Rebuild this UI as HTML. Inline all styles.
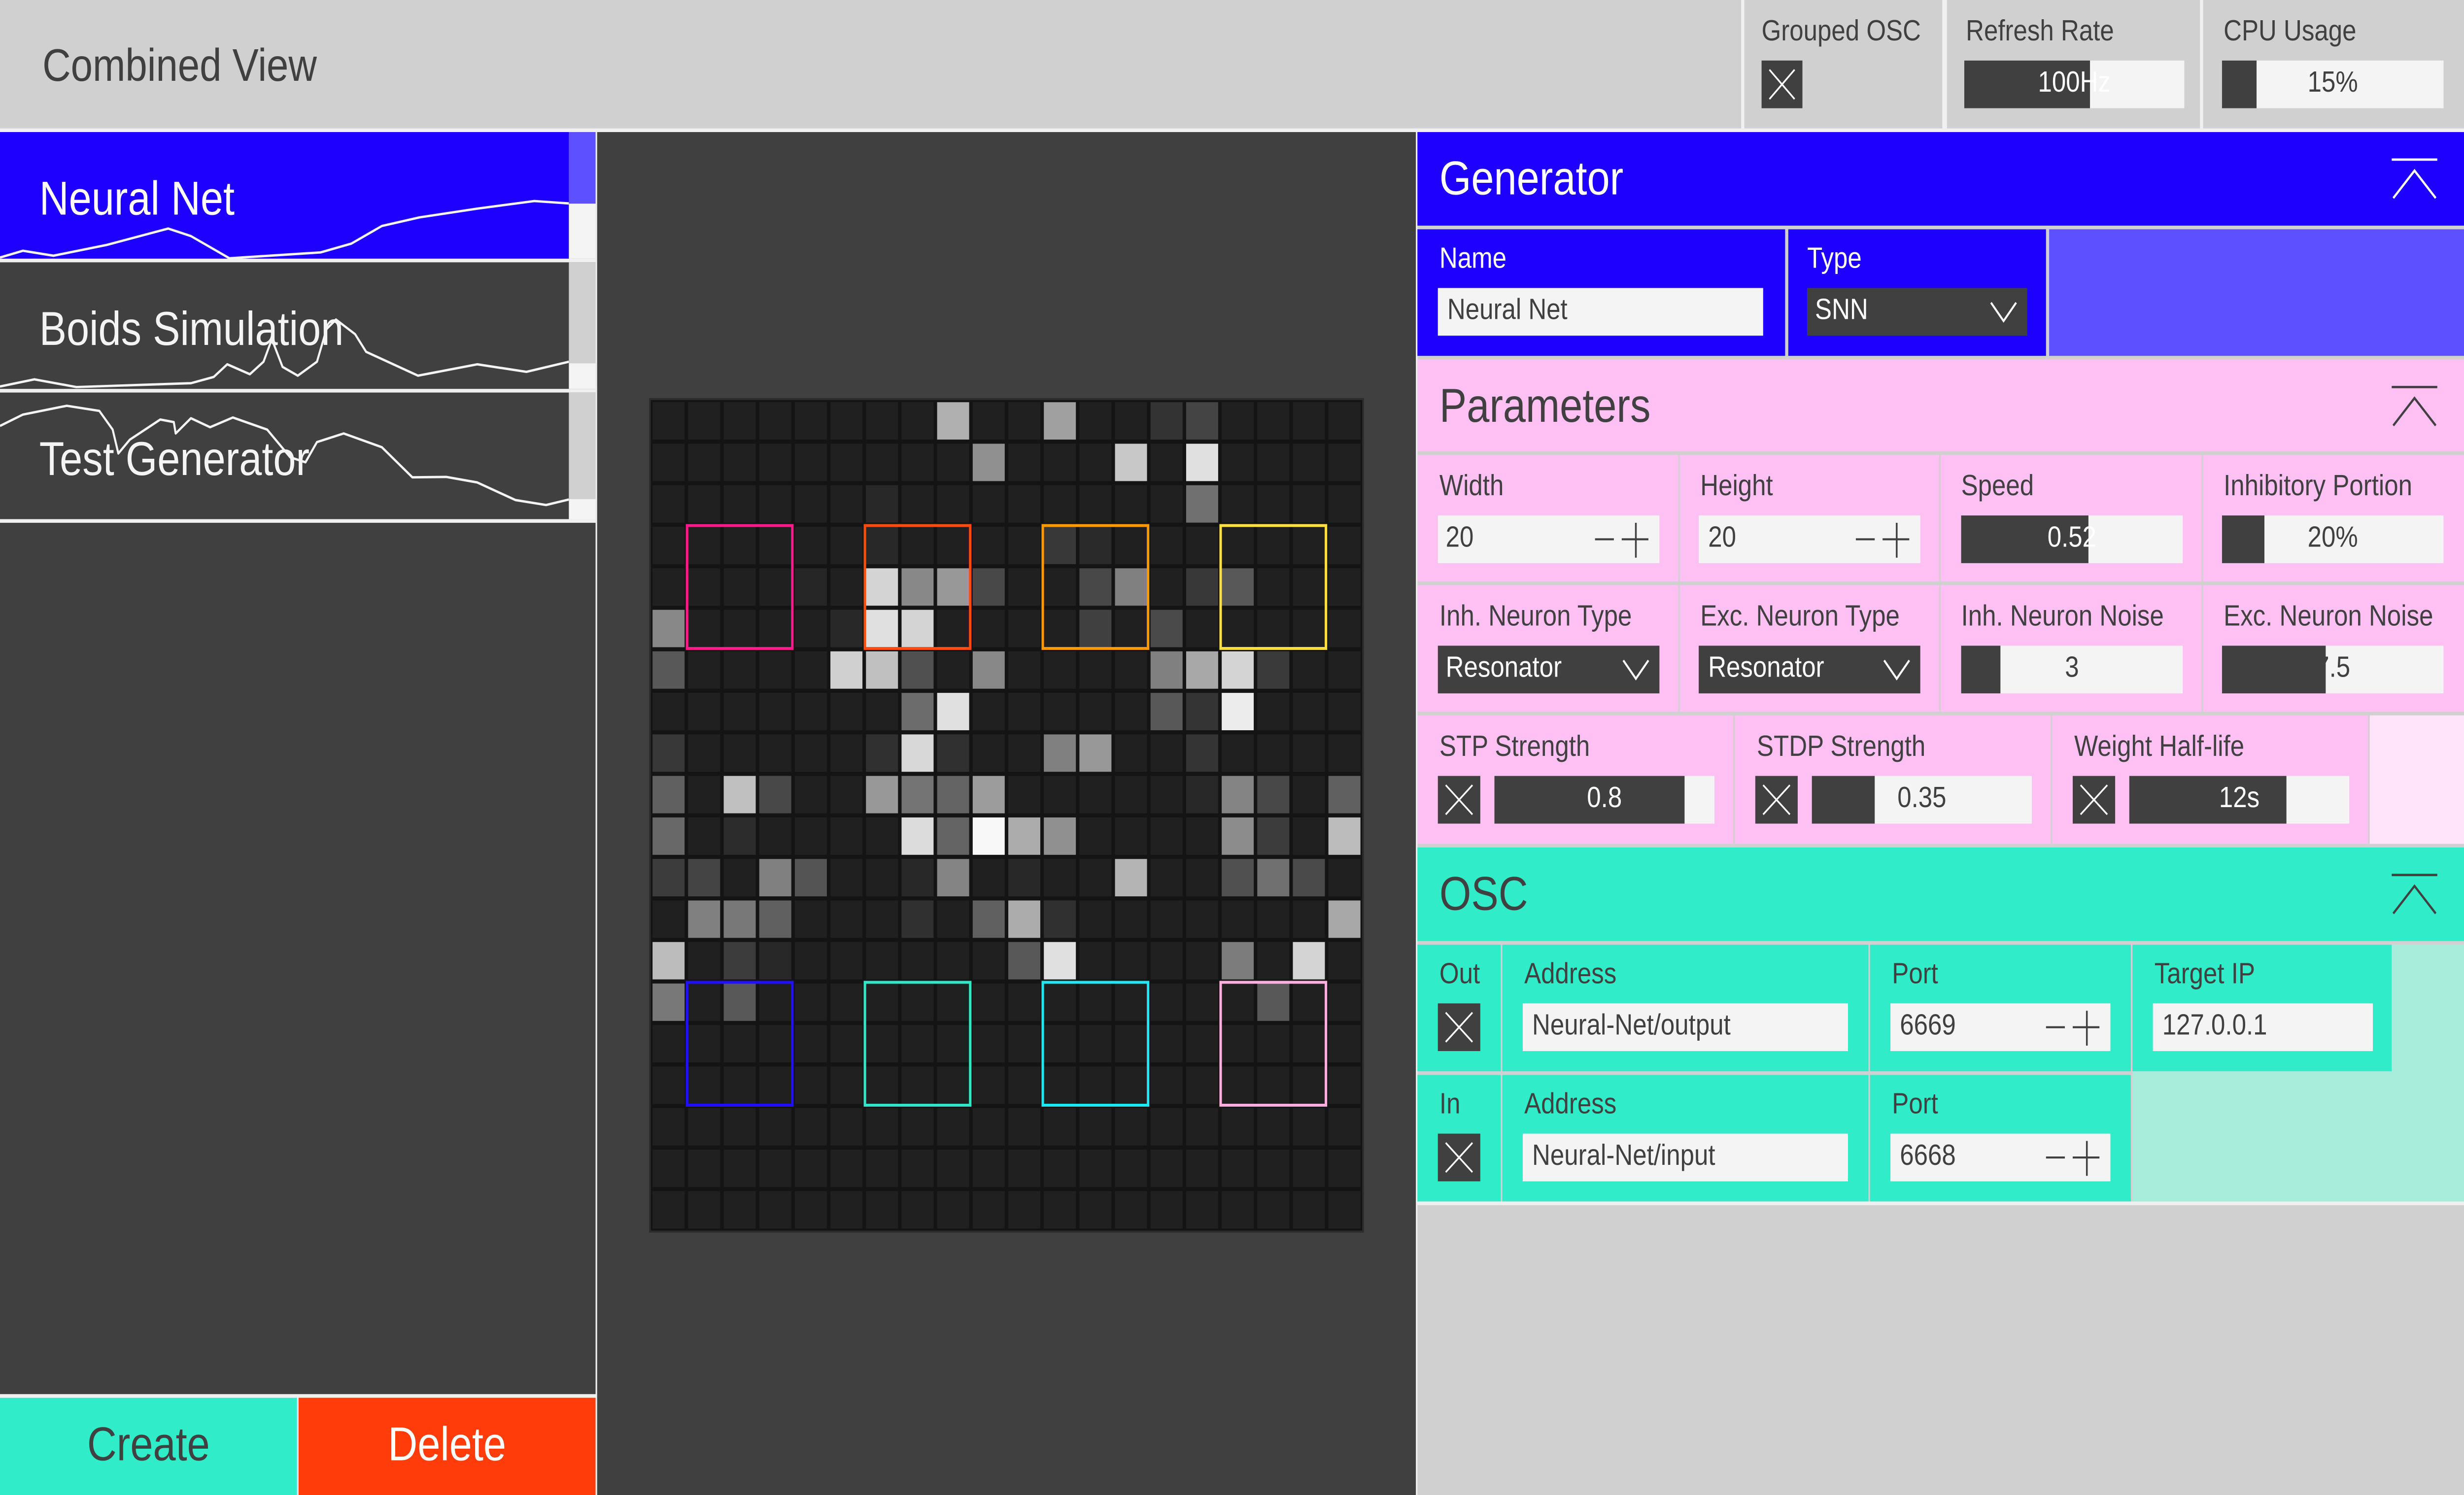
<!DOCTYPE html>
<html><head><meta charset="utf-8">
<style>
html,body{margin:0;padding:0;width:100vw;height:100vh;overflow:hidden;background:#404040}
#w{position:absolute;left:0;top:0;width:1568px;height:815px;transform:scale(3.72449,3.72270);transform-origin:0 0;font-family:"Liberation Sans Narrow","Liberation Sans",sans-serif;color:#404040;background:#f0f0f0;overflow:hidden}
.a{position:absolute;box-sizing:border-box}
.t{position:absolute;white-space:nowrap}
.lbl{font-size:16px}
.big{font-size:26px}
.inp{background:#f4f4f4}
.dk{background:#404040}
.cb{position:absolute;background:#404040}
.cb svg{position:absolute;left:0;top:0}
</style></head><body><div id="w">
<!-- top bar -->
<div class="a" style="left:0;top:0;width:1108px;height:70px;background:#d0d0d0"></div>
<div class="t" style="left:27px;top:22px;font-size:25px">Combined View</div>
<div class="a" style="left:1110px;top:0;width:126px;height:70px;background:#d0d0d0"></div>
<div class="a" style="left:1239px;top:0;width:161px;height:70px;background:#d0d0d0"></div>
<div class="a" style="left:1402px;top:0;width:166px;height:70px;background:#d0d0d0"></div>
<div class="t lbl" style="left:1121px;top:9px">Grouped OSC</div>
<div class="t lbl" style="left:1251px;top:9px">Refresh Rate</div>
<div class="t lbl" style="left:1415px;top:9px">CPU Usage</div>
<div class="cb" style="left:1121px;top:33px;width:26px;height:26px"><svg width="26" height="26"><path d="M5 5L21 21M21 5L5 21" stroke="#fff" stroke-width="1"/></svg></div>
<div class="a inp" style="left:1250px;top:33px;width:140px;height:26px"></div>
<div class="a dk" style="left:1250px;top:33px;width:80px;height:26px"></div>
<div class="t" style="left:1250px;top:37px;width:140px;text-align:center;font-size:16px;color:#fff">100Hz</div>
<div class="a inp" style="left:1414px;top:33px;width:141px;height:26px"></div>
<div class="a dk" style="left:1414px;top:33px;width:22px;height:26px"></div>
<div class="t" style="left:1414px;top:37px;width:141px;text-align:center;font-size:16px">15%</div>

<!-- left panel -->
<div class="a" style="left:0;top:72px;width:379px;height:688px;background:#404040"></div>
<div class="a" style="left:0;top:72px;width:362px;height:69px;background:#1e00ff"></div>
<div class="a" style="left:362px;top:72px;width:17px;height:39px;background:#5c50ff"></div>
<div class="a" style="left:362px;top:111px;width:17px;height:30px;background:#f4f4f4"></div>
<div class="a" style="left:0;top:141px;width:379px;height:2px;background:#f0f0f0"></div>
<div class="a" style="left:362px;top:143px;width:17px;height:55px;background:#d0d0d0"></div>
<div class="a" style="left:362px;top:198px;width:17px;height:14px;background:#f4f4f4"></div>
<div class="a" style="left:0;top:212px;width:379px;height:2px;background:#f0f0f0"></div>
<div class="a" style="left:362px;top:214px;width:17px;height:58px;background:#d0d0d0"></div>
<div class="a" style="left:362px;top:272px;width:17px;height:11px;background:#f4f4f4"></div>
<div class="a" style="left:0;top:283px;width:379px;height:2px;background:#f0f0f0"></div>
<div class="t" style="left:25px;top:93px;font-size:26px;color:#fff">Neural Net</div>
<div class="t" style="left:25px;top:164px;font-size:26px;color:#f4f4f4">Boids Simulation</div>
<div class="t" style="left:25px;top:235px;font-size:26px;color:#f4f4f4">Test Generator</div>
<svg class="a" style="left:0;top:0" width="362" height="290" viewBox="0 0 362 290"><g fill="none" stroke="#f4f4f4" stroke-width="1.3" stroke-linejoin="round">
<polyline points="0,140.4 14.6,136.7 34,139.4 68,133.5 107,124.6 121.5,128.7 146,140.8 204,137.6 223.6,132.8 243,123.2 267,118.5 304,113.7 340,109.6 362,110.9"/>
<polyline points="0,210.7 21.9,206.8 48.6,211 121.5,208.9 136,205.5 144.6,198.6 159,204 167.7,197.2 173,184.9 179.8,200 189.5,204.8 201.7,197.2 207.8,179.4 213.8,174.2 226,182.2 233,191.8 266,204.8 303.7,198.6 335,202.7 362,197.2"/>
<polyline points="0,232.2 14.6,226 42.5,221.2 63.2,224 71.7,234.2 75.3,247.2 82.6,239.7 102,228.7 110.6,230.1 111.8,236.3 121.5,228 133.7,232.9 148.2,227.6 170,234.2 184.7,249.3 194.4,252 201.7,241 218.7,236.3 243,243.8 262.4,260.2 284,260 303.7,263 328,272.6 347.5,275.3 362,272.3"/>
</g></svg>
<div class="a" style="left:0;top:762px;width:189px;height:53px;background:#30ecc8"></div>
<div class="t" style="left:0;top:772px;width:189px;text-align:center;font-size:26px">Create</div>
<div class="a" style="left:190px;top:762px;width:189px;height:53px;background:#ff3c0a"></div>
<div class="t" style="left:190px;top:772px;width:189px;text-align:center;font-size:26px;color:#fff">Delete</div>

<!-- center -->
<div class="a" style="left:380px;top:72px;width:521px;height:743px;background:#404040"></div>
<svg class="a" style="left:413px;top:217px" width="455" height="455" viewBox="-0.05 -0.05 20.1 20.1">
<defs><pattern id="p" patternUnits="userSpaceOnUse" width="1" height="1"><rect width="1" height="1" fill="#141414"/><rect x=".05" y=".05" width=".9" height=".9" fill="#202020"/></pattern></defs>
<rect x="-0.05" y="-0.05" width="20.1" height="20.1" fill="#2c2c2c"/>
<rect x="0" y="0" width="20" height="20" fill="url(#p)"/>
<g transform="translate(.05 .05)">
<rect x="8" y="0" width=".9" height=".9" fill="#b0b0b0"/><rect x="11" y="0" width=".9" height=".9" fill="#a0a0a0"/><rect x="14" y="0" width=".9" height=".9" fill="#333"/><rect x="15" y="0" width=".9" height=".9" fill="#444"/>
<rect x="9" y="1" width=".9" height=".9" fill="#909090"/><rect x="13" y="1" width=".9" height=".9" fill="#c8c8c8"/><rect x="15" y="1" width=".9" height=".9" fill="#e0e0e0"/>
<rect x="6" y="2" width=".9" height=".9" fill="#282828"/><rect x="15" y="2" width=".9" height=".9" fill="#707070"/>
<rect x="6" y="3" width=".9" height=".9" fill="#282828"/><rect x="11" y="3" width=".9" height=".9" fill="#383838"/><rect x="12" y="3" width=".9" height=".9" fill="#2a2a2a"/>
<rect x="4" y="4" width=".9" height=".9" fill="#262626"/><rect x="6" y="4" width=".9" height=".9" fill="#d4d4d4"/><rect x="7" y="4" width=".9" height=".9" fill="#888"/><rect x="8" y="4" width=".9" height=".9" fill="#989898"/><rect x="9" y="4" width=".9" height=".9" fill="#484848"/><rect x="12" y="4" width=".9" height=".9" fill="#484848"/><rect x="13" y="4" width=".9" height=".9" fill="#808080"/><rect x="15" y="4" width=".9" height=".9" fill="#383838"/><rect x="16" y="4" width=".9" height=".9" fill="#585858"/>
<rect x="0" y="5" width=".9" height=".9" fill="#888"/><rect x="5" y="5" width=".9" height=".9" fill="#282828"/><rect x="6" y="5" width=".9" height=".9" fill="#e0e0e0"/><rect x="7" y="5" width=".9" height=".9" fill="#d4d4d4"/><rect x="12" y="5" width=".9" height=".9" fill="#404040"/><rect x="14" y="5" width=".9" height=".9" fill="#4a4a4a"/>
<rect x="0" y="6" width=".9" height=".9" fill="#585858"/><rect x="5" y="6" width=".9" height=".9" fill="#d0d0d0"/><rect x="6" y="6" width=".9" height=".9" fill="#c0c0c0"/><rect x="7" y="6" width=".9" height=".9" fill="#505050"/><rect x="9" y="6" width=".9" height=".9" fill="#888"/><rect x="14" y="6" width=".9" height=".9" fill="#808080"/><rect x="15" y="6" width=".9" height=".9" fill="#a8a8a8"/><rect x="16" y="6" width=".9" height=".9" fill="#d4d4d4"/><rect x="17" y="6" width=".9" height=".9" fill="#3a3a3a"/>
<rect x="7" y="7" width=".9" height=".9" fill="#6c6c6c"/><rect x="8" y="7" width=".9" height=".9" fill="#e0e0e0"/><rect x="14" y="7" width=".9" height=".9" fill="#585858"/><rect x="15" y="7" width=".9" height=".9" fill="#343434"/><rect x="16" y="7" width=".9" height=".9" fill="#ececec"/>
<rect x="0" y="8" width=".9" height=".9" fill="#383838"/><rect x="6" y="8" width=".9" height=".9" fill="#303030"/><rect x="7" y="8" width=".9" height=".9" fill="#d8d8d8"/><rect x="8" y="8" width=".9" height=".9" fill="#303030"/><rect x="11" y="8" width=".9" height=".9" fill="#808080"/><rect x="12" y="8" width=".9" height=".9" fill="#989898"/><rect x="15" y="8" width=".9" height=".9" fill="#343434"/>
<rect x="0" y="9" width=".9" height=".9" fill="#606060"/><rect x="2" y="9" width=".9" height=".9" fill="#c0c0c0"/><rect x="3" y="9" width=".9" height=".9" fill="#484848"/><rect x="6" y="9" width=".9" height=".9" fill="#989898"/><rect x="7" y="9" width=".9" height=".9" fill="#747474"/><rect x="8" y="9" width=".9" height=".9" fill="#646464"/><rect x="9" y="9" width=".9" height=".9" fill="#9c9c9c"/><rect x="15" y="9" width=".9" height=".9" fill="#282828"/><rect x="16" y="9" width=".9" height=".9" fill="#848484"/><rect x="17" y="9" width=".9" height=".9" fill="#484848"/><rect x="19" y="9" width=".9" height=".9" fill="#606060"/>
<rect x="0" y="10" width=".9" height=".9" fill="#686868"/><rect x="2" y="10" width=".9" height=".9" fill="#2c2c2c"/><rect x="7" y="10" width=".9" height=".9" fill="#dcdcdc"/><rect x="8" y="10" width=".9" height=".9" fill="#646464"/><rect x="9" y="10" width=".9" height=".9" fill="#f8f8f8"/><rect x="10" y="10" width=".9" height=".9" fill="#acacac"/><rect x="11" y="10" width=".9" height=".9" fill="#909090"/><rect x="16" y="10" width=".9" height=".9" fill="#8c8c8c"/><rect x="17" y="10" width=".9" height=".9" fill="#3c3c3c"/><rect x="19" y="10" width=".9" height=".9" fill="#bcbcbc"/>
<rect x="0" y="11" width=".9" height=".9" fill="#3c3c3c"/><rect x="1" y="11" width=".9" height=".9" fill="#444"/><rect x="3" y="11" width=".9" height=".9" fill="#808080"/><rect x="4" y="11" width=".9" height=".9" fill="#545454"/><rect x="7" y="11" width=".9" height=".9" fill="#282828"/><rect x="8" y="11" width=".9" height=".9" fill="#848484"/><rect x="10" y="11" width=".9" height=".9" fill="#282828"/><rect x="13" y="11" width=".9" height=".9" fill="#b4b4b4"/><rect x="16" y="11" width=".9" height=".9" fill="#505050"/><rect x="17" y="11" width=".9" height=".9" fill="#707070"/><rect x="18" y="11" width=".9" height=".9" fill="#4a4a4a"/>
<rect x="1" y="12" width=".9" height=".9" fill="#808080"/><rect x="2" y="12" width=".9" height=".9" fill="#787878"/><rect x="3" y="12" width=".9" height=".9" fill="#606060"/><rect x="7" y="12" width=".9" height=".9" fill="#303030"/><rect x="9" y="12" width=".9" height=".9" fill="#606060"/><rect x="10" y="12" width=".9" height=".9" fill="#acacac"/><rect x="11" y="12" width=".9" height=".9" fill="#303030"/><rect x="19" y="12" width=".9" height=".9" fill="#a8a8a8"/>
<rect x="0" y="13" width=".9" height=".9" fill="#bcbcbc"/><rect x="2" y="13" width=".9" height=".9" fill="#3c3c3c"/><rect x="3" y="13" width=".9" height=".9" fill="#282828"/><rect x="10" y="13" width=".9" height=".9" fill="#585858"/><rect x="11" y="13" width=".9" height=".9" fill="#e0e0e0"/><rect x="16" y="13" width=".9" height=".9" fill="#7c7c7c"/><rect x="18" y="13" width=".9" height=".9" fill="#d4d4d4"/>
<rect x="0" y="14" width=".9" height=".9" fill="#787878"/><rect x="2" y="14" width=".9" height=".9" fill="#585858"/><rect x="17" y="14" width=".9" height=".9" fill="#585858"/>
</g>
<g fill="none" stroke-width=".07">
<rect x="1.02" y="3.02" width="2.96" height="2.96" stroke="#ff1a8c"/>
<rect x="6.02" y="3.02" width="2.96" height="2.96" stroke="#ff4a10"/>
<rect x="11.02" y="3.02" width="2.96" height="2.96" stroke="#ff9900"/>
<rect x="16.02" y="3.02" width="2.96" height="2.96" stroke="#ffe040"/>
<rect x="1.02" y="14.02" width="2.96" height="2.96" stroke="#2010ff"/>
<rect x="6.02" y="14.02" width="2.96" height="2.96" stroke="#30e8c8"/>
<rect x="11.02" y="14.02" width="2.96" height="2.96" stroke="#20e8f0"/>
<rect x="16.02" y="14.02" width="2.96" height="2.96" stroke="#ffb0e0"/>
</g></svg>

<!-- right panel -->
<div class="a" style="left:902px;top:72px;width:666px;height:743px;background:#d0d0d0"></div>
<div class="a" style="left:902px;top:72px;width:666px;height:51px;background:#1e00ff"></div>
<div class="t big" style="left:916px;top:82px;color:#fff">Generator</div>
<svg class="a" style="left:1518px;top:84px" width="36" height="30"><path d="M4 3H33M5 24L18.5 9L32 24" fill="none" stroke="#fff" stroke-width="1.3"/></svg>
<div class="a" style="left:902px;top:125px;width:234px;height:69px;background:#1e00ff"></div>
<div class="a" style="left:1138px;top:125px;width:164px;height:69px;background:#1e00ff"></div>
<div class="a" style="left:1304px;top:125px;width:264px;height:69px;background:#5c50ff"></div>
<div class="t lbl" style="left:916px;top:133px;color:#fff">Name</div>
<div class="t lbl" style="left:1150px;top:133px;color:#fff">Type</div>
<div class="a inp" style="left:915px;top:157px;width:207px;height:26px"></div>
<div class="t lbl" style="left:921px;top:161px">Neural Net</div>
<div class="a dk" style="left:1150px;top:157px;width:140px;height:26px"></div>
<div class="t lbl" style="left:1155px;top:161px;color:#fff">SNN</div>
<svg class="a" style="left:1266px;top:163px" width="18" height="14"><path d="M1 2L9 12L17 2" fill="none" stroke="#fff" stroke-width="1.2"/></svg>

<div class="a" style="left:902px;top:196px;width:666px;height:50px;background:#ffc0f4"></div>
<div class="t big" style="left:916px;top:206px">Parameters</div>
<svg class="a" style="left:1518px;top:208px" width="36" height="30"><path d="M4 3H33M5 24L18.5 9L32 24" fill="none" stroke="#404040" stroke-width="1.3"/></svg>
<div class="a" style="left:902px;top:248px;width:166px;height:69px;background:#ffc0f4"></div>
<div class="a" style="left:1069px;top:248px;width:165px;height:69px;background:#ffc0f4"></div>
<div class="a" style="left:1235px;top:248px;width:166px;height:69px;background:#ffc0f4"></div>
<div class="a" style="left:1402px;top:248px;width:166px;height:69px;background:#ffc0f4"></div>
<div class="t lbl" style="left:916px;top:257px">Width</div>
<div class="t lbl" style="left:1082px;top:257px">Height</div>
<div class="t lbl" style="left:1248px;top:257px">Speed</div>
<div class="t lbl" style="left:1415px;top:257px">Inhibitory Portion</div>
<div class="a inp" style="left:915px;top:281px;width:141px;height:26px"></div>
<div class="t lbl" style="left:920px;top:285px">20</div>
<svg class="a" style="left:1013px;top:283px" width="40" height="24"><path d="M2 11H14M19 11H36M28 2V21" fill="none" stroke="#404040" stroke-width="1.1"/></svg>
<div class="a inp" style="left:1081px;top:281px;width:141px;height:26px"></div>
<div class="t lbl" style="left:1087px;top:285px">20</div>
<svg class="a" style="left:1179px;top:283px" width="40" height="24"><path d="M2 11H14M19 11H36M28 2V21" fill="none" stroke="#404040" stroke-width="1.1"/></svg>
<div class="a inp" style="left:1248px;top:281px;width:141px;height:26px"></div>
<div class="a dk" style="left:1248px;top:281px;width:81px;height:26px"></div>
<div class="t lbl" style="left:1248px;top:285px;width:141px;text-align:center;color:#fff">0.52</div>
<div class="a inp" style="left:1414px;top:281px;width:141px;height:26px"></div>
<div class="a dk" style="left:1414px;top:281px;width:27px;height:26px"></div>
<div class="t lbl" style="left:1414px;top:285px;width:141px;text-align:center">20%</div>
<div class="a" style="left:902px;top:319px;width:166px;height:69px;background:#ffc0f4"></div>
<div class="a" style="left:1069px;top:319px;width:165px;height:69px;background:#ffc0f4"></div>
<div class="a" style="left:1235px;top:319px;width:166px;height:69px;background:#ffc0f4"></div>
<div class="a" style="left:1402px;top:319px;width:166px;height:69px;background:#ffc0f4"></div>
<div class="t lbl" style="left:916px;top:328px">Inh. Neuron Type</div>
<div class="t lbl" style="left:1082px;top:328px">Exc. Neuron Type</div>
<div class="t lbl" style="left:1248px;top:328px">Inh. Neuron Noise</div>
<div class="t lbl" style="left:1415px;top:328px">Exc. Neuron Noise</div>
<div class="a dk" style="left:915px;top:352px;width:141px;height:26px"></div>
<div class="t lbl" style="left:920px;top:356px;color:#fff">Resonator</div>
<svg class="a" style="left:1032px;top:358px" width="18" height="14"><path d="M1 2L9 12L17 2" fill="none" stroke="#fff" stroke-width="1.2"/></svg>
<div class="a dk" style="left:1081px;top:352px;width:141px;height:26px"></div>
<div class="t lbl" style="left:1087px;top:356px;color:#fff">Resonator</div>
<svg class="a" style="left:1198px;top:358px" width="18" height="14"><path d="M1 2L9 12L17 2" fill="none" stroke="#fff" stroke-width="1.2"/></svg>
<div class="a inp" style="left:1248px;top:352px;width:141px;height:26px"></div>
<div class="a dk" style="left:1248px;top:352px;width:25px;height:26px"></div>
<div class="t lbl" style="left:1248px;top:356px;width:141px;text-align:center">3</div>
<div class="a inp" style="left:1414px;top:352px;width:141px;height:26px"></div>
<div class="a dk" style="left:1414px;top:352px;width:66px;height:26px"></div>
<div class="t lbl" style="left:1414px;top:356px;width:141px;text-align:center">7.5</div>
<div class="a" style="left:902px;top:390px;width:201px;height:70px;background:#ffc0f4"></div>
<div class="a" style="left:1104px;top:390px;width:201px;height:70px;background:#ffc0f4"></div>
<div class="a" style="left:1306px;top:390px;width:201px;height:70px;background:#ffc0f4"></div>
<div class="a" style="left:1508px;top:390px;width:60px;height:70px;background:#ffe4fa"></div>
<div class="t lbl" style="left:916px;top:399px">STP Strength</div>
<div class="t lbl" style="left:1118px;top:399px">STDP Strength</div>
<div class="t lbl" style="left:1320px;top:399px">Weight Half-life</div>
<div class="cb" style="left:915px;top:423px;width:27px;height:26px"><svg width="27" height="26"><path d="M5 5L22 21M22 5L5 21" stroke="#fff" stroke-width="1"/></svg></div>
<div class="a inp" style="left:951px;top:423px;width:140px;height:26px"></div>
<div class="a dk" style="left:951px;top:423px;width:121px;height:26px"></div>
<div class="t lbl" style="left:951px;top:427px;width:140px;text-align:center;color:#fff">0.8</div>
<div class="cb" style="left:1117px;top:423px;width:27px;height:26px"><svg width="27" height="26"><path d="M5 5L22 21M22 5L5 21" stroke="#fff" stroke-width="1"/></svg></div>
<div class="a inp" style="left:1153px;top:423px;width:140px;height:26px"></div>
<div class="a dk" style="left:1153px;top:423px;width:40px;height:26px"></div>
<div class="t lbl" style="left:1153px;top:427px;width:140px;text-align:center">0.35</div>
<div class="cb" style="left:1319px;top:423px;width:27px;height:26px"><svg width="27" height="26"><path d="M5 5L22 21M22 5L5 21" stroke="#fff" stroke-width="1"/></svg></div>
<div class="a inp" style="left:1355px;top:423px;width:140px;height:26px"></div>
<div class="a dk" style="left:1355px;top:423px;width:100px;height:26px"></div>
<div class="t lbl" style="left:1355px;top:427px;width:140px;text-align:center;color:#fff">12s</div>

<div class="a" style="left:902px;top:462px;width:666px;height:51px;background:#30ecc8"></div>
<div class="t big" style="left:916px;top:472px">OSC</div>
<svg class="a" style="left:1518px;top:474px" width="36" height="30"><path d="M4 3H33M5 24L18.5 9L32 24" fill="none" stroke="#404040" stroke-width="1.3"/></svg>
<div class="a" style="left:1357px;top:515px;width:211px;height:140px;background:#a8ecdc"></div>
<div class="a" style="left:902px;top:515px;width:53px;height:69px;background:#30ecc8"></div>
<div class="a" style="left:956px;top:515px;width:233px;height:69px;background:#30ecc8"></div>
<div class="a" style="left:1190px;top:515px;width:166px;height:69px;background:#30ecc8"></div>
<div class="a" style="left:1357px;top:515px;width:165px;height:69px;background:#30ecc8"></div>
<div class="a" style="left:902px;top:586px;width:53px;height:69px;background:#30ecc8"></div>
<div class="a" style="left:956px;top:586px;width:233px;height:69px;background:#30ecc8"></div>
<div class="a" style="left:1190px;top:586px;width:166px;height:69px;background:#30ecc8"></div>
<div class="t lbl" style="left:916px;top:523px">Out</div>
<div class="t lbl" style="left:970px;top:523px">Address</div>
<div class="t lbl" style="left:1204px;top:523px">Port</div>
<div class="t lbl" style="left:1371px;top:523px">Target IP</div>
<div class="cb" style="left:915px;top:547px;width:27px;height:26px"><svg width="27" height="26"><path d="M5 5L22 21M22 5L5 21" stroke="#fff" stroke-width="1"/></svg></div>
<div class="a inp" style="left:969px;top:547px;width:207px;height:26px"></div>
<div class="t lbl" style="left:975px;top:551px">Neural-Net/output</div>
<div class="a inp" style="left:1203px;top:547px;width:140px;height:26px"></div>
<div class="t lbl" style="left:1209px;top:551px">6669</div>
<svg class="a" style="left:1300px;top:549px" width="40" height="24"><path d="M2 11H14M19 11H36M28 2V21" fill="none" stroke="#404040" stroke-width="1.1"/></svg>
<div class="a inp" style="left:1370px;top:547px;width:140px;height:26px"></div>
<div class="t lbl" style="left:1376px;top:551px">127.0.0.1</div>
<div class="t lbl" style="left:916px;top:594px">In</div>
<div class="t lbl" style="left:970px;top:594px">Address</div>
<div class="t lbl" style="left:1204px;top:594px">Port</div>
<div class="cb" style="left:915px;top:618px;width:27px;height:26px"><svg width="27" height="26"><path d="M5 5L22 21M22 5L5 21" stroke="#fff" stroke-width="1"/></svg></div>
<div class="a inp" style="left:969px;top:618px;width:207px;height:26px"></div>
<div class="t lbl" style="left:975px;top:622px">Neural-Net/input</div>
<div class="a inp" style="left:1203px;top:618px;width:140px;height:26px"></div>
<div class="t lbl" style="left:1209px;top:622px">6668</div>
<svg class="a" style="left:1300px;top:620px" width="40" height="24"><path d="M2 11H14M19 11H36M28 2V21" fill="none" stroke="#404040" stroke-width="1.1"/></svg>
<div class="a" style="left:902px;top:655px;width:666px;height:2px;background:#f0f0f0"></div>
</div>
<script>
(function(){
function f(){
var w=document.documentElement.clientWidth||window.innerWidth;
var h=document.documentElement.clientHeight||window.innerHeight;
if(!w||!h)return;
document.getElementById('w').style.transform='scale('+(w/1568)+','+(h/815)+')';
}
f();window.addEventListener('resize',f);window.addEventListener('load',f);
})();
</script>
</body></html>
